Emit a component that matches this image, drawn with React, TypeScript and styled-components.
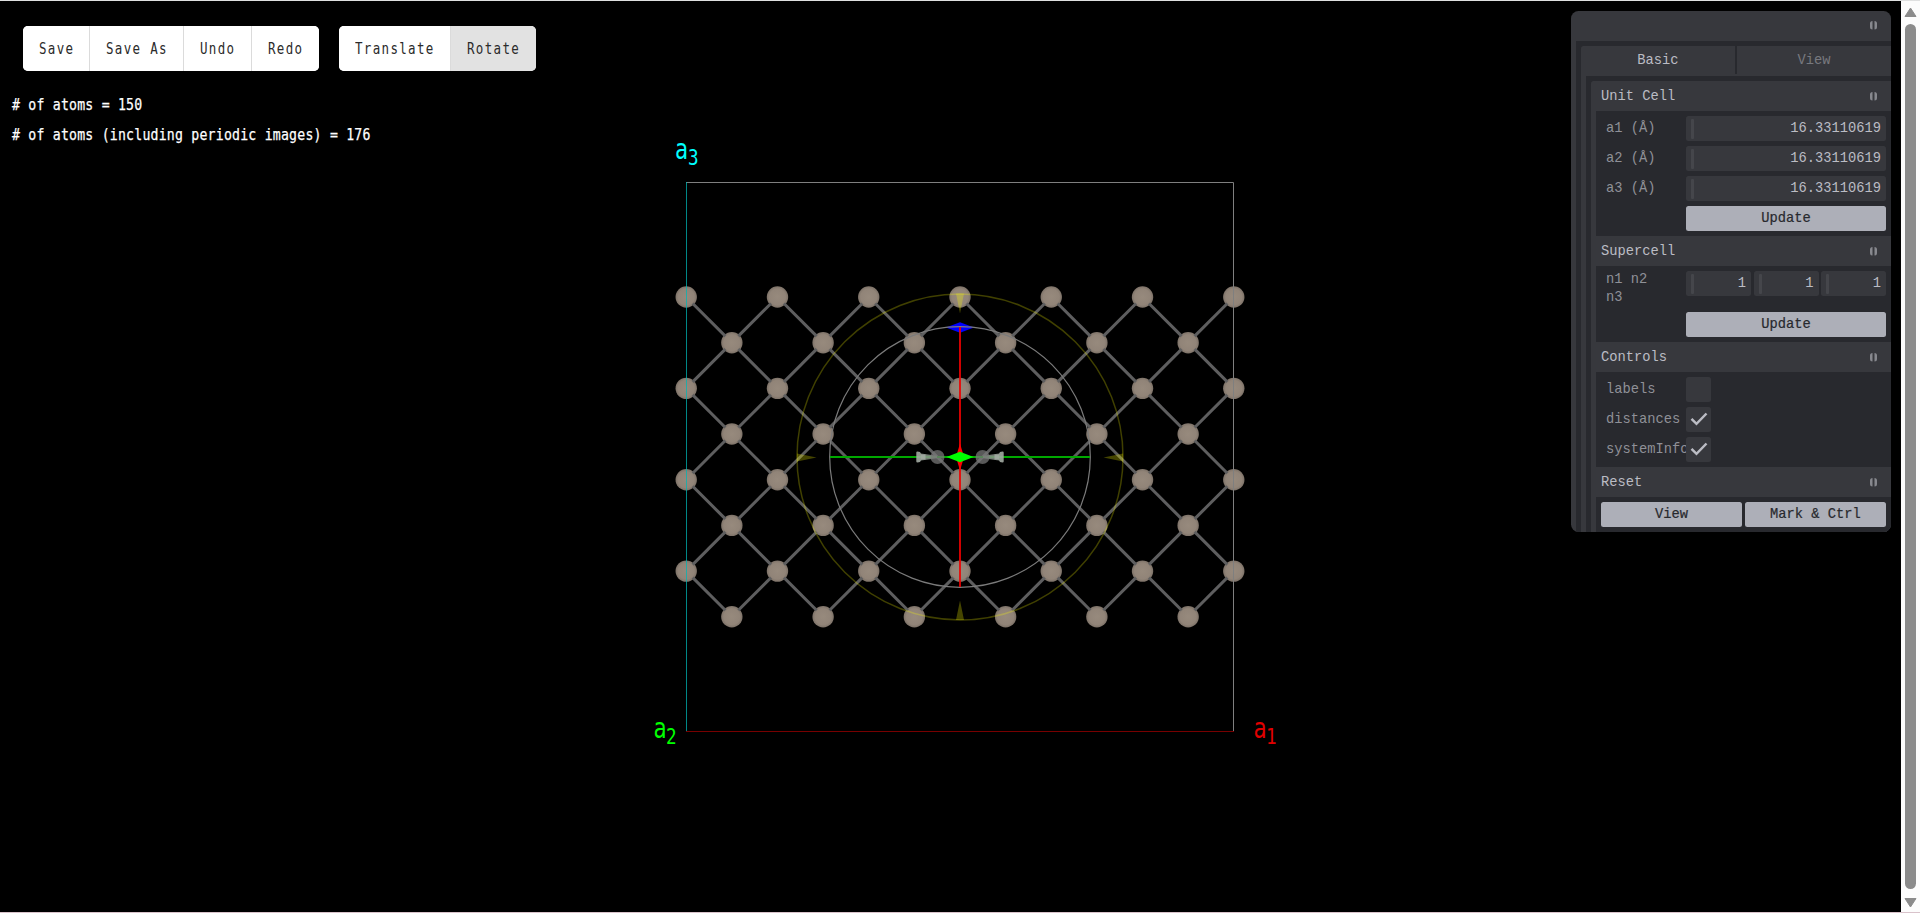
import React from "react";
import styled, { createGlobalStyle } from "styled-components";

const GlobalStyle = createGlobalStyle`
  * { box-sizing: border-box; }
  body { margin: 0; background: #000; overflow: hidden; }
`;

const uiFont = `"DejaVu Sans Mono", "Liberation Mono", monospace`;
const paneFont = `"Liberation Mono", "Courier New", monospace`;

const Page = styled.div`
  display: flex;
  width: 1920px;
  height: 913px;
  background: #000;
  border-top: 1px solid #dfe0e0;
  border-bottom: 1px solid #d9c3cb;
`;

const Viewer = styled.main`
  position: relative;
  flex: 1;
  display: flex;
  justify-content: space-between;
  align-items: flex-start;
  overflow: hidden;
`;

const Scene = styled.svg`
  position: absolute;
  left: 0;
  top: 0;
`;

const Overlay = styled.div`
  position: relative;
  display: flex;
  flex-direction: column;
`;

const Toolbar = styled.div`
  display: flex;
  gap: 20px;
  padding: 25px 0 0 23px;
`;

const ButtonGroup = styled.div`
  display: flex;
  height: 45px;
  border-radius: 5px;
  overflow: hidden;
  background: #fff;
`;

const ToolButton = styled.button<{ $active?: boolean }>`
  height: 45px;
  padding: 0 16px;
  border: 0;
  background: ${(p) => (p.$active ? "#e2e2e2" : "#fff")};
  box-shadow: ${(p) => (p.$active ? "none" : "inset -1px 0 0 #dbdbdb")};
  color: #2b2b2b;
  &:last-child { box-shadow: none; }
`;

const Condensed = styled.span<{ $chars: number; $advance: number; $size: number; $squeeze: number }>`
  display: block;
  width: ${(p) => p.$chars * p.$advance}px;
  font: ${(p) => p.$size}px ${uiFont};
  letter-spacing: ${(p) => p.$advance / p.$squeeze - p.$size * 0.602}px;
  transform: scaleX(${(p) => p.$squeeze});
  transform-origin: 0 50%;
  white-space: pre;
  text-align: left;
`;

const Info = styled.div`
  padding: 18px 0 0 12px;
  color: #fff;
  -webkit-text-stroke: 0.25px #fff;
`;

const InfoLine = styled.div`
  height: 30px;
  display: flex;
  align-items: center;
`;

const Pane = styled.aside`
  position: relative;
  width: 320px;
  height: 521px;
  margin: 10px 10px 0 0;
  border-radius: 7.5px;
  overflow: hidden;
  background: #37383d;
  color: #bbbcc4;
  font: 13.75px/25px ${paneFont};
`;

const PaneTitle = styled.header`
  height: 30px;
  display: flex;
  align-items: center;
  justify-content: flex-end;
  padding: 0 14px 2px 0;
`;

const PaneBody = styled.div`
  margin-left: 5px;
  padding: 5px 0 0 5px;
  background: #28292e;
`;

const TabFrame = styled.div`
  background: #37383d;
  border-radius: 2.5px 0 0 0;
`;

const Tabs = styled.div`
  display: flex;
  height: 30px;
`;

const Tab = styled.div<{ $active?: boolean }>`
  width: 154px;
  line-height: 30px;
  text-align: center;
  color: ${(p) => (p.$active ? "#bbbcc4" : "#78797f")};
`;

const TabDivider = styled.i`
  width: 2px;
  height: 28px;
  background: #28292e;
`;

const FolderList = styled.div`
  background: #28292e;
  margin-left: 5px;
  padding: 5px 0 0 5px;
`;

const FolderFrame = styled.div`
  background: #37383d;
  border-radius: 2.5px 0 0 0;
`;

const FolderHeader = styled.div`
  height: 30px;
  display: flex;
  align-items: center;
  justify-content: space-between;
  padding: 0 14px 0 10px;
`;

const FolderBody = styled.div`
  display: flex;
  flex-direction: column;
  gap: 5px;
  margin-left: 5px;
  padding: 5px;
  background: #28292e;
`;

const Row = styled.div`
  display: flex;
  align-items: flex-start;
  justify-content: space-between;
  min-height: 25px;
`;

const Label = styled.div<{ $wrap?: boolean }>`
  width: 80px;
  margin-left: 5px;
  overflow: hidden;
  color: #8f9097;
  line-height: ${(p) => (p.$wrap ? "18px" : "25px")};
  padding-right: ${(p) => (p.$wrap ? "20px" : "0")};
  white-space: ${(p) => (p.$wrap ? "normal" : "nowrap")};
`;

const Value = styled.div`
  display: flex;
  gap: 2.5px;
  width: 200px;
`;

const NumberInput = styled.div`
  flex: 1;
  height: 25px;
  display: flex;
  align-items: center;
  justify-content: space-between;
  padding: 0 5px;
  border-radius: 2.5px;
  background: #37383d;
  line-height: 23px;
`;

const Knob = styled.i`
  width: 3px;
  height: 20px;
  border-radius: 1px;
  background: #45464b;
`;

const PaneButton = styled.button`
  flex: 1;
  height: 25px;
  padding: 0;
  border: 0;
  border-radius: 2.5px;
  background: #adafb8;
  color: #28292e;
  font: 500 13.75px/25px ${paneFont};
  -webkit-text-stroke: 0.2px #28292e;
`;

const ButtonRow = styled.div`
  display: flex;
  gap: 3px;
`;

const CheckBox = styled.div`
  width: 25px;
  height: 25px;
  border-radius: 2.5px;
  background: #37383d;
`;

const Scrollbar = styled.div`
  width: 19px;
  display: flex;
  flex-direction: column;
  align-items: center;
  padding-top: 6px;
  background: #fcfcfc;
`;

const Thumb = styled.div`
  width: 11px;
  height: 865px;
  margin: 7px 0 9px;
  border-radius: 6px;
  background: #8b8b8b;
`;

const toolGroups = [
  [{ t: "Save" }, { t: "Save As" }, { t: "Undo" }, { t: "Redo" }],
  [{ t: "Translate" }, { t: "Rotate", active: true }],
];

const info = ["# of atoms = 150", "# of atoms (including periodic images) = 176"];

const STEP = 45.63;
const atoms: [number, number][] = [];
const bonds: [number, number, number, number][] = [];
const px = (c: number) => 960 + (c - 6) * STEP;
const py = (r: number) => 297 + r * 45.68;
for (let r = 0; r < 8; r++) {
  for (let c = r % 2; c <= 12; c += 2) {
    atoms.push([px(c), py(r)]);
    if (r < 7) {
      for (const d of [-1, 1]) {
        if (c + d < 0 || c + d > 12) continue;
        const o = 6.5 * d;
        bonds.push([px(c) + o, py(r) + 6.5, px(c + d) - o, py(r + 1) - 6.5]);
      }
    }
  }
}

const AxisLabel = ({ x, y, n, color, dx = 12.5 }: { x: number; y: number; n: string; color: string; dx?: number }) => (
  <g fill={color} fontFamily="DejaVu Sans Mono">
    <text transform={`translate(${x} ${y}) scale(.76 1)`} fontSize="28.5">a</text>
    <text transform={`translate(${x + dx} ${y + 5.5}) scale(.8 1)`} fontSize="22">{n}</text>
  </g>
);

const Crystal = () => (
  <Scene width="1901" height="911" viewBox="0 1 1901 911">
    <defs>
      <radialGradient id="atom">
        <stop offset="0" stopColor="#978a7d" />
        <stop offset=".75" stopColor="#918478" />
        <stop offset="1" stopColor="#7c7167" />
      </radialGradient>
    </defs>
    {atoms.map(([x, y], i) => <circle key={i} cx={x} cy={y} r="10.7" fill="url(#atom)" />)}
    <g stroke="#5e5e5f" strokeWidth="3">
      {bonds.map((b, i) => <line key={i} x1={b[0]} y1={b[1]} x2={b[2]} y2={b[3]} />)}
    </g>
    <g fill="none" strokeWidth="1">
      <path d="M686 182.5H1233.5V731" stroke="#7f7f7f" />
      <path d="M686.5 182V731" stroke="#00b4b4" strokeOpacity=".75" />
      <path d="M686 731.5H1234" stroke="#780000" />
    </g>
    <circle cx="960" cy="457" r="163" fill="none" stroke="#ff0" strokeOpacity=".25" strokeWidth="1.5" />
    <path d="M956 293.5h8l-4 20zM956 620h8l-4-19.500zM797 453.500v8l19.500-4zM1123 453.500v8l-19.500-4z" fill="#ff0" fillOpacity=".27" />
    <path d="M946 327.500L960 322.300L974 327.500L960 332.700z" fill="#00f" />
    <circle cx="960" cy="457" r="130.300" fill="none" stroke="#7b7b7b" strokeWidth="1.2" />
    <path d="M830 457H1090" stroke="#00a800" strokeWidth="2" />
    <path d="M921 453.500L937 455.800V458.200L921 460.500zM999 453.500L983 455.800V458.200L999 460.500z" fill="#8a948a" fillOpacity=".85" />
    <g fill="#a3aba3" fillOpacity=".9">
      <path d="M916.300 452.500q0-1 1.200-1l2.500 .6l1.500 2.400h4v5h-4l-1.500 2.400l-2.500 .6q-1.200 0-1.200-1zM1003.700 452.500q0-1-1.200-1l-2.500 .6l-1.500 2.400h-4v5h4l1.500 2.400l2.500 .6q1.200 0 1.200-1z" />
    </g>
    <g fill="#777" fillOpacity=".75">
      <circle cx="937.5" cy="457" r="7" />
      <circle cx="982.5" cy="457" r="7" />
    </g>
    <path d="M960 327V587" stroke="#e00" strokeOpacity=".88" strokeWidth="2" />
    <path d="M956 457L960 443.500L964 457L960 470.500z" fill="#f00" />
    <path d="M946.500 457L960 451.700L973.500 457L960 462.300z" fill="#0f0" />
    <AxisLabel x={675} y={159} n="3" color="#0ff" dx={13} />
    <AxisLabel x={653.5} y={738} n="2" color="#0f0" />
    <AxisLabel x={1253.5} y={738} n="1" color="#e00000" />
  </Scene>
);

const Grip = () => (
  <svg width="7" height="9" viewBox="0 0 7 9" fill="#87888e">
    <path d="M2.500 0v8.500q-2.500 0-2.500-2.500v-3.500q0-2.500 2.500-2.500zM4.500 0v8.500q2.500 0 2.500-2.500v-3.500q0-2.500-2.500-2.500z" />
  </svg>
);

const Tick = () => (
  <svg width="25" height="25" viewBox="0 0 25 25" fill="none" stroke="#bbbcc4" strokeWidth="2.5" display="block">
    <path d="M5.500 11.800L10.500 16.800L20.500 6.500" />
  </svg>
);

const Folder = ({ title, children }: { title: string; children: React.ReactNode }) => (
  <>
    <FolderHeader><span>{title}</span><Grip /></FolderHeader>
    <FolderBody>{children}</FolderBody>
  </>
);

const Numbers = ({ label, values, wrap }: { label: string; values: string[]; wrap?: boolean }) => (
  <Row>
    <Label $wrap={wrap}>{label}</Label>
    <Value>
      {values.map((v, i) => <NumberInput key={i}><Knob /><span>{v}</span></NumberInput>)}
    </Value>
  </Row>
);

const Update = () => (
  <Row><Label /><Value><PaneButton>Update</PaneButton></Value></Row>
);

const Check = ({ label, on }: { label: string; on?: boolean }) => (
  <Row><Label>{label}</Label><Value><CheckBox>{on && <Tick />}</CheckBox></Value></Row>
);

export default function App() {
  return (
    <>
      <GlobalStyle />
      <Page>
        <Viewer>
          <Crystal />
          <Overlay>
            <Toolbar>
              {toolGroups.map((g, i) => (
                <ButtonGroup key={i}>
                  {g.map((b) => (
                    <ToolButton key={b.t} $active={"active" in b}>
                      <Condensed $chars={b.t.length} $advance={8.85} $size={16} $squeeze={0.78}>{b.t}</Condensed>
                    </ToolButton>
                  ))}
                </ButtonGroup>
              ))}
            </Toolbar>
            <Info>
              {info.map((t) => (
                <InfoLine key={t}>
                  <Condensed $chars={t.length} $advance={8.15} $size={16.5} $squeeze={0.8}>{t}</Condensed>
                </InfoLine>
              ))}
            </Info>
          </Overlay>
          <Pane>
            <PaneTitle><Grip /></PaneTitle>
            <PaneBody>
              <TabFrame>
                <Tabs><Tab $active>Basic</Tab><TabDivider /><Tab>View</Tab></Tabs>
                <FolderList>
                  <FolderFrame>
                    <Folder title="Unit Cell">
                      {["a1 (Å)", "a2 (Å)", "a3 (Å)"].map((l) => <Numbers key={l} label={l} values={["16.33110619"]} />)}
                      <Update />
                    </Folder>
                    <Folder title="Supercell">
                      <Numbers label="n1 n2 n3" values={["1", "1", "1"]} wrap />
                      <Update />
                    </Folder>
                    <Folder title="Controls">
                      <Check label="labels" />
                      <Check label="distances" on />
                      <Check label="systemInfo" on />
                    </Folder>
                    <Folder title="Reset">
                      <ButtonRow><PaneButton>View</PaneButton><PaneButton>Mark &amp; Ctrl</PaneButton></ButtonRow>
                    </Folder>
                  </FolderFrame>
                </FolderList>
              </TabFrame>
            </PaneBody>
          </Pane>
        </Viewer>
        <Scrollbar>
          <svg width="13" height="10"><path d="M6.500 1L12 9.500H1z" fill="#8b8b8b" stroke="#8b8b8b" strokeLinejoin="round" /></svg>
          <Thumb />
          <svg width="13" height="10"><path d="M6.500 9L12 .5H1z" fill="#8b8b8b" stroke="#8b8b8b" strokeLinejoin="round" /></svg>
        </Scrollbar>
      </Page>
    </>
  );
}
